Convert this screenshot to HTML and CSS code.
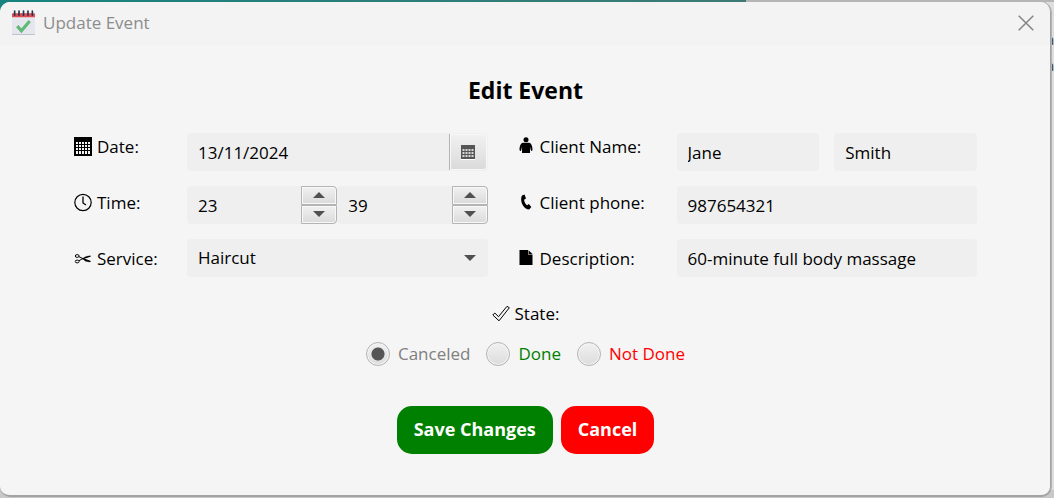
FILE: index.html
```html
<!DOCTYPE html>
<html lang="en">
<head>
<meta charset="utf-8">
<title>Update Event</title>
<meta name="viewport" content="width=device-width, initial-scale=1">
<link rel="stylesheet" href="styles.css">
</head>
<body>
<div class="backdrop" aria-hidden="true"><span>a</span><span>a</span></div>
<div class="window" role="dialog" aria-labelledby="window-title">
  <header class="titlebar">
    <svg class="app-icon" viewBox="0 0 24 24" aria-hidden="true">
      <rect x="1" y="3" width="22" height="21" rx="1" fill="#bfc3cc"/>
      <rect x="1" y="3" width="22" height="20" rx="1" fill="#e6e7ee"/>
      <path d="M1 7V4q0-1 1-1h20q1 0 1 1v3z" fill="#dc4a53"/>
      <path d="M3.5 1v4M7.7 1v4M12 1v4M16.3 1v4M20.5 1v4" stroke="#26364a" stroke-width="1.6" stroke-linecap="round"/>
      <path d="M6 15.500l4 4.500 8-9.500" fill="none" stroke="#62b976" stroke-width="3"/>
    </svg>
    <span id="window-title" class="window-title">Update Event</span>
    <button class="close" type="button" aria-label="Close">
      <svg viewBox="0 0 16 16"><path d="M.7.7l14.600 14.600M15.300.7L.7 15.300" stroke="#858585" stroke-width="1.500"/></svg>
    </button>
  </header>
  <form class="form">
    <h1 class="heading">Edit Event</h1>
    <div class="columns">
      <div class="labels labels-left">
        <label class="label" for="date">
          <svg class="icon" viewBox="0 0 18 20"><path d="M0 0h18v19H0z"/><path d="M2 5h14v12H2z" fill="#f4f4f4"/><path d="M2 7.500h14M2 10.500h14M2 13.500h14M4.500 5v12M7.500 5v12M10.500 5v12M13.500 5v12" stroke="#000" stroke-width="1"/></svg>
          Date:</label>
        <label class="label" for="hour">
          <svg class="icon" viewBox="0 0 18 20"><circle cx="9" cy="9.500" r="8.200" fill="none" stroke="#000" stroke-width="1.200"/><path d="M9 3.500v6.500l3 2" fill="none" stroke="#000" stroke-width="1.300"/></svg>
          Time:</label>
        <label class="label" for="service">
          <svg class="icon" viewBox="0 0 18 20" fill="none" stroke="#000" stroke-width="1"><ellipse cx="3.200" cy="7" rx="1.900" ry="1.400"/><ellipse cx="3.200" cy="12.500" rx="1.900" ry="1.400"/><path d="M5 7.700l3.500 1.700 8 3M5 11.700l3.500-2 8-2.500"/><path d="M8 9.200l8.500 3.200-1 .5-4-.7zM8 10.200l8.500-3-1-.4-4 .9z" fill="#000" stroke-width=".3"/></svg>
          Service:</label>
      </div>
      <div class="fields">
        <div class="row field">
          <input id="date" class="input" type="text" value="13/11/2024">
          <button class="date-button" type="button" aria-label="Open calendar">
            <svg viewBox="0 0 14 15"><path d="M0 14h14v1H0z" fill="#fff"/><path d="M0 0h14v14H0z" fill="#555"/><path d="M1.500 5h11M1.500 8h11M1.500 11h11" stroke="#fff" stroke-width="1.600" stroke-dasharray="2 1"/></svg>
          </button>
        </div>
        <div class="row">
          <div class="spinner field">
            <input id="hour" class="input" type="text" inputmode="numeric" value="23">
            <div class="steps">
              <button type="button" aria-label="Increase hour"><svg viewBox="0 0 12 7"><path d="M0 6l6-6 6 6z" fill="#505050"/></svg></button>
              <button type="button" aria-label="Decrease hour"><svg viewBox="0 0 12 7"><path d="M0 0h12L6 6z" fill="#505050"/></svg></button>
            </div>
          </div>
          <div class="spinner field">
            <input class="input" type="text" inputmode="numeric" aria-label="Minute" value="39">
            <div class="steps">
              <button type="button" aria-label="Increase minute"><svg viewBox="0 0 12 7"><path d="M0 6l6-6 6 6z" fill="#505050"/></svg></button>
              <button type="button" aria-label="Decrease minute"><svg viewBox="0 0 12 7"><path d="M0 0h12L6 6z" fill="#505050"/></svg></button>
            </div>
          </div>
        </div>
        <div class="row field select-box">
          <select id="service" class="input"><option>Haircut</option></select>
          <svg class="arrow" viewBox="0 0 12 7" aria-hidden="true"><path d="M0 0h12L6 6z" fill="#505050"/></svg>
        </div>
      </div>
      <div class="labels labels-right">
        <label class="label" for="first-name">
          <svg class="icon icon-narrow" viewBox="0 0 14 20"><circle cx="7" cy="2.700" r="2.500"/><path d="M4 5.800h6c2.500 0 3.500 4 3.500 7.300q-1 2-1.800 0L11 9.500V16H3V9.500l-.7 3.600q-.8 2-1.800 0C.5 9.800 1.500 5.800 4 5.800z"/></svg>
          Client Name:</label>
        <label class="label" for="phone">
          <svg class="icon icon-narrow" viewBox="0 0 14 20"><path d="M3 2.500L5.500 1.500l1.500 4-1.900 1.300c.2 2.300 1.300 4.300 3 5.500l1.800-1.200 2.400 3-1.800 2.200C7.300 17.300 2.500 12.500 2.200 7.200 2.100 5.300 2.300 3.700 3 2.500z"/></svg>
          Client phone:</label>
        <label class="label" for="description">
          <svg class="icon icon-narrow" viewBox="0 0 14 20"><path d="M.5 1H9v4.500h4.500V16H.5z"/><path d="M9.500 1.200l4 3.800h-4z"/></svg>
          Description:</label>
      </div>
      <div class="fields">
        <div class="row row-split">
          <div class="field"><input id="first-name" class="input" type="text" value="Jane"></div>
          <div class="field"><input class="input" type="text" aria-label="Last name" value="Smith"></div>
        </div>
        <div class="row field"><input id="phone" class="input" type="tel" value="987654321"></div>
        <div class="row field"><input id="description" class="input" type="text" value="60-minute full body massage"></div>
      </div>
    </div>
    <fieldset class="state">
      <legend class="label state-label">
        <svg class="icon" viewBox="0 0 18 20"><path d="M.8 11l2-2 3.700 3.700L15 2.300l2.300 1.500L7 16.800z" fill="none" stroke="#000" stroke-width="1"/></svg>
        State:</legend>
      <div class="options">
        <label class="option canceled"><input type="radio" name="state" checked>Canceled</label>
        <label class="option done"><input type="radio" name="state">Done</label>
        <label class="option not-done"><input type="radio" name="state">Not Done</label>
      </div>
    </fieldset>
    <div class="actions">
      <button class="action save" type="button">Save Changes</button>
      <button class="action cancel" type="button">Cancel</button>
    </div>
  </form>
</div>
</body>
</html>
```
FILE: styles.css
```css
* { box-sizing: border-box; }

body {
  margin: 0;
  min-height: 100vh;
  display: flex;
  padding: 2px 3px 1px 0;
  background: linear-gradient(90deg, #16837e, #3d7a75 746px, #b5b5b5 746px) top / 100% 12px no-repeat, #c8c8c8;
  color: #000;
  font: 17px/26px "Open Sans", "Noto Sans", sans-serif;
}

input, select, button { font: inherit; color: inherit; }
svg { display: block; flex: none; }

.backdrop {
  position: absolute;
  top: 2px;
  right: 0;
  bottom: 8px;
  width: 8px;
  padding-top: 24px;
  overflow: hidden;
  background: #dedede;
  color: #444;
  font-size: 15px;
  text-align: right;
}
.backdrop span { display: block; }

.window {
  position: relative;
  flex: 1;
  display: flex;
  flex-direction: column;
  overflow: hidden;
  border: solid #a3a3a3;
  border-width: 0 1px 2px 0;
  border-radius: 10px;
  background: #f5f5f5;
  box-shadow: 1px 0 0 #b4b4b4;
}

.titlebar {
  display: flex;
  align-items: center;
  height: 43px;
  padding: 0 16px 2px 11px;
  background: #f3f3f3;
  color: #8c8c8c;
}
.app-icon { width: 25px; height: 25px; }
.window-title { flex: 1; margin-left: 7px; }
.close { padding: 0; border: 0; background: none; }
.close svg { width: 16px; height: 16px; }

.form { padding: 29px 73px 39px 74px; }

.heading {
  margin: 0 0 27px;
  font-size: 23px;
  line-height: 32px;
  font-weight: 700;
  text-align: center;
}

.columns { display: flex; }
.labels { display: flex; flex-direction: column; gap: 30px; flex: none; padding-top: 1px; }
.labels-left { width: 113px; }
.labels-right { width: 158px; margin-left: 31px; }
.label { display: flex; align-items: center; gap: 5px; white-space: nowrap; }
.labels-right .label { gap: 7px; }
.icon { width: 18px; height: 20px; }
.icon-narrow { width: 14px; }

.fields { flex: 1; min-width: 0; display: flex; flex-direction: column; gap: 15px; }
.row { display: flex; height: 38px; }
.row-split { gap: 15px; }
.row-split .field { flex: 1; }
.field { display: flex; min-width: 0; border-radius: 4px; background: #efefef; }
.input {
  flex: 1;
  width: 100%;
  min-width: 0;
  height: 38px;
  padding: 0 11px;
  border: 0;
  border-radius: 4px;
  background: transparent;
  appearance: none;
}

.date-button, .steps button {
  display: flex;
  align-items: center;
  justify-content: center;
  padding: 0;
  border: 1px solid #b4b4b4;
  background: linear-gradient(#f1f1f1, #dadada);
  box-shadow: inset 0 0 0 1px #f8f8f8;
}
.date-button {
  width: 38px;
  margin: 1px 1px 1px 0;
  border-width: 0 0 0 1px;
  border-radius: 0 4px 4px 0;
}
.date-button svg { width: 14px; height: 15px; }

.spinner { flex: 1; }
.steps { width: 36px; display: flex; flex-direction: column; }
.steps button { flex: 1; }
.steps button:first-child { border-top-right-radius: 4px; }
.steps button:last-child { border-bottom-right-radius: 4px; }
.steps svg, .arrow { width: 12px; height: 7px; }
.select-box { align-items: center; padding-right: 12px; }

.state { margin: 24px 0 0; padding: 0; border: 0; }
.state-label { margin: 0 auto; padding: 0; }
.options { display: flex; justify-content: center; gap: 16px; margin-top: 14px; }
.option { display: flex; align-items: center; gap: 8px; }
.option input {
  width: 24px;
  height: 24px;
  margin: 0;
  appearance: none;
  border: 1px solid #b4b4b4;
  border-radius: 50%;
  background: linear-gradient(#f1f1f1, #dcdcdc);
  box-shadow: inset 0 0 0 1px #f4f4f4;
}
.option input:checked { background: radial-gradient(circle, #555 6px, transparent 7px), linear-gradient(#f1f1f1, #dcdcdc); }
.canceled { color: #808080; }
.done { color: #008000; }
.not-done { color: #f00; }

.actions { display: flex; justify-content: center; gap: 8px; margin-top: 39px; }
.action {
  height: 48px;
  padding: 0 17px 2px;
  border: 0;
  border-radius: 15px;
  color: #fff;
  font-size: 18px;
  font-weight: 700;
}
.save { background: #008000; }
.cancel { background: #f00; }
```
